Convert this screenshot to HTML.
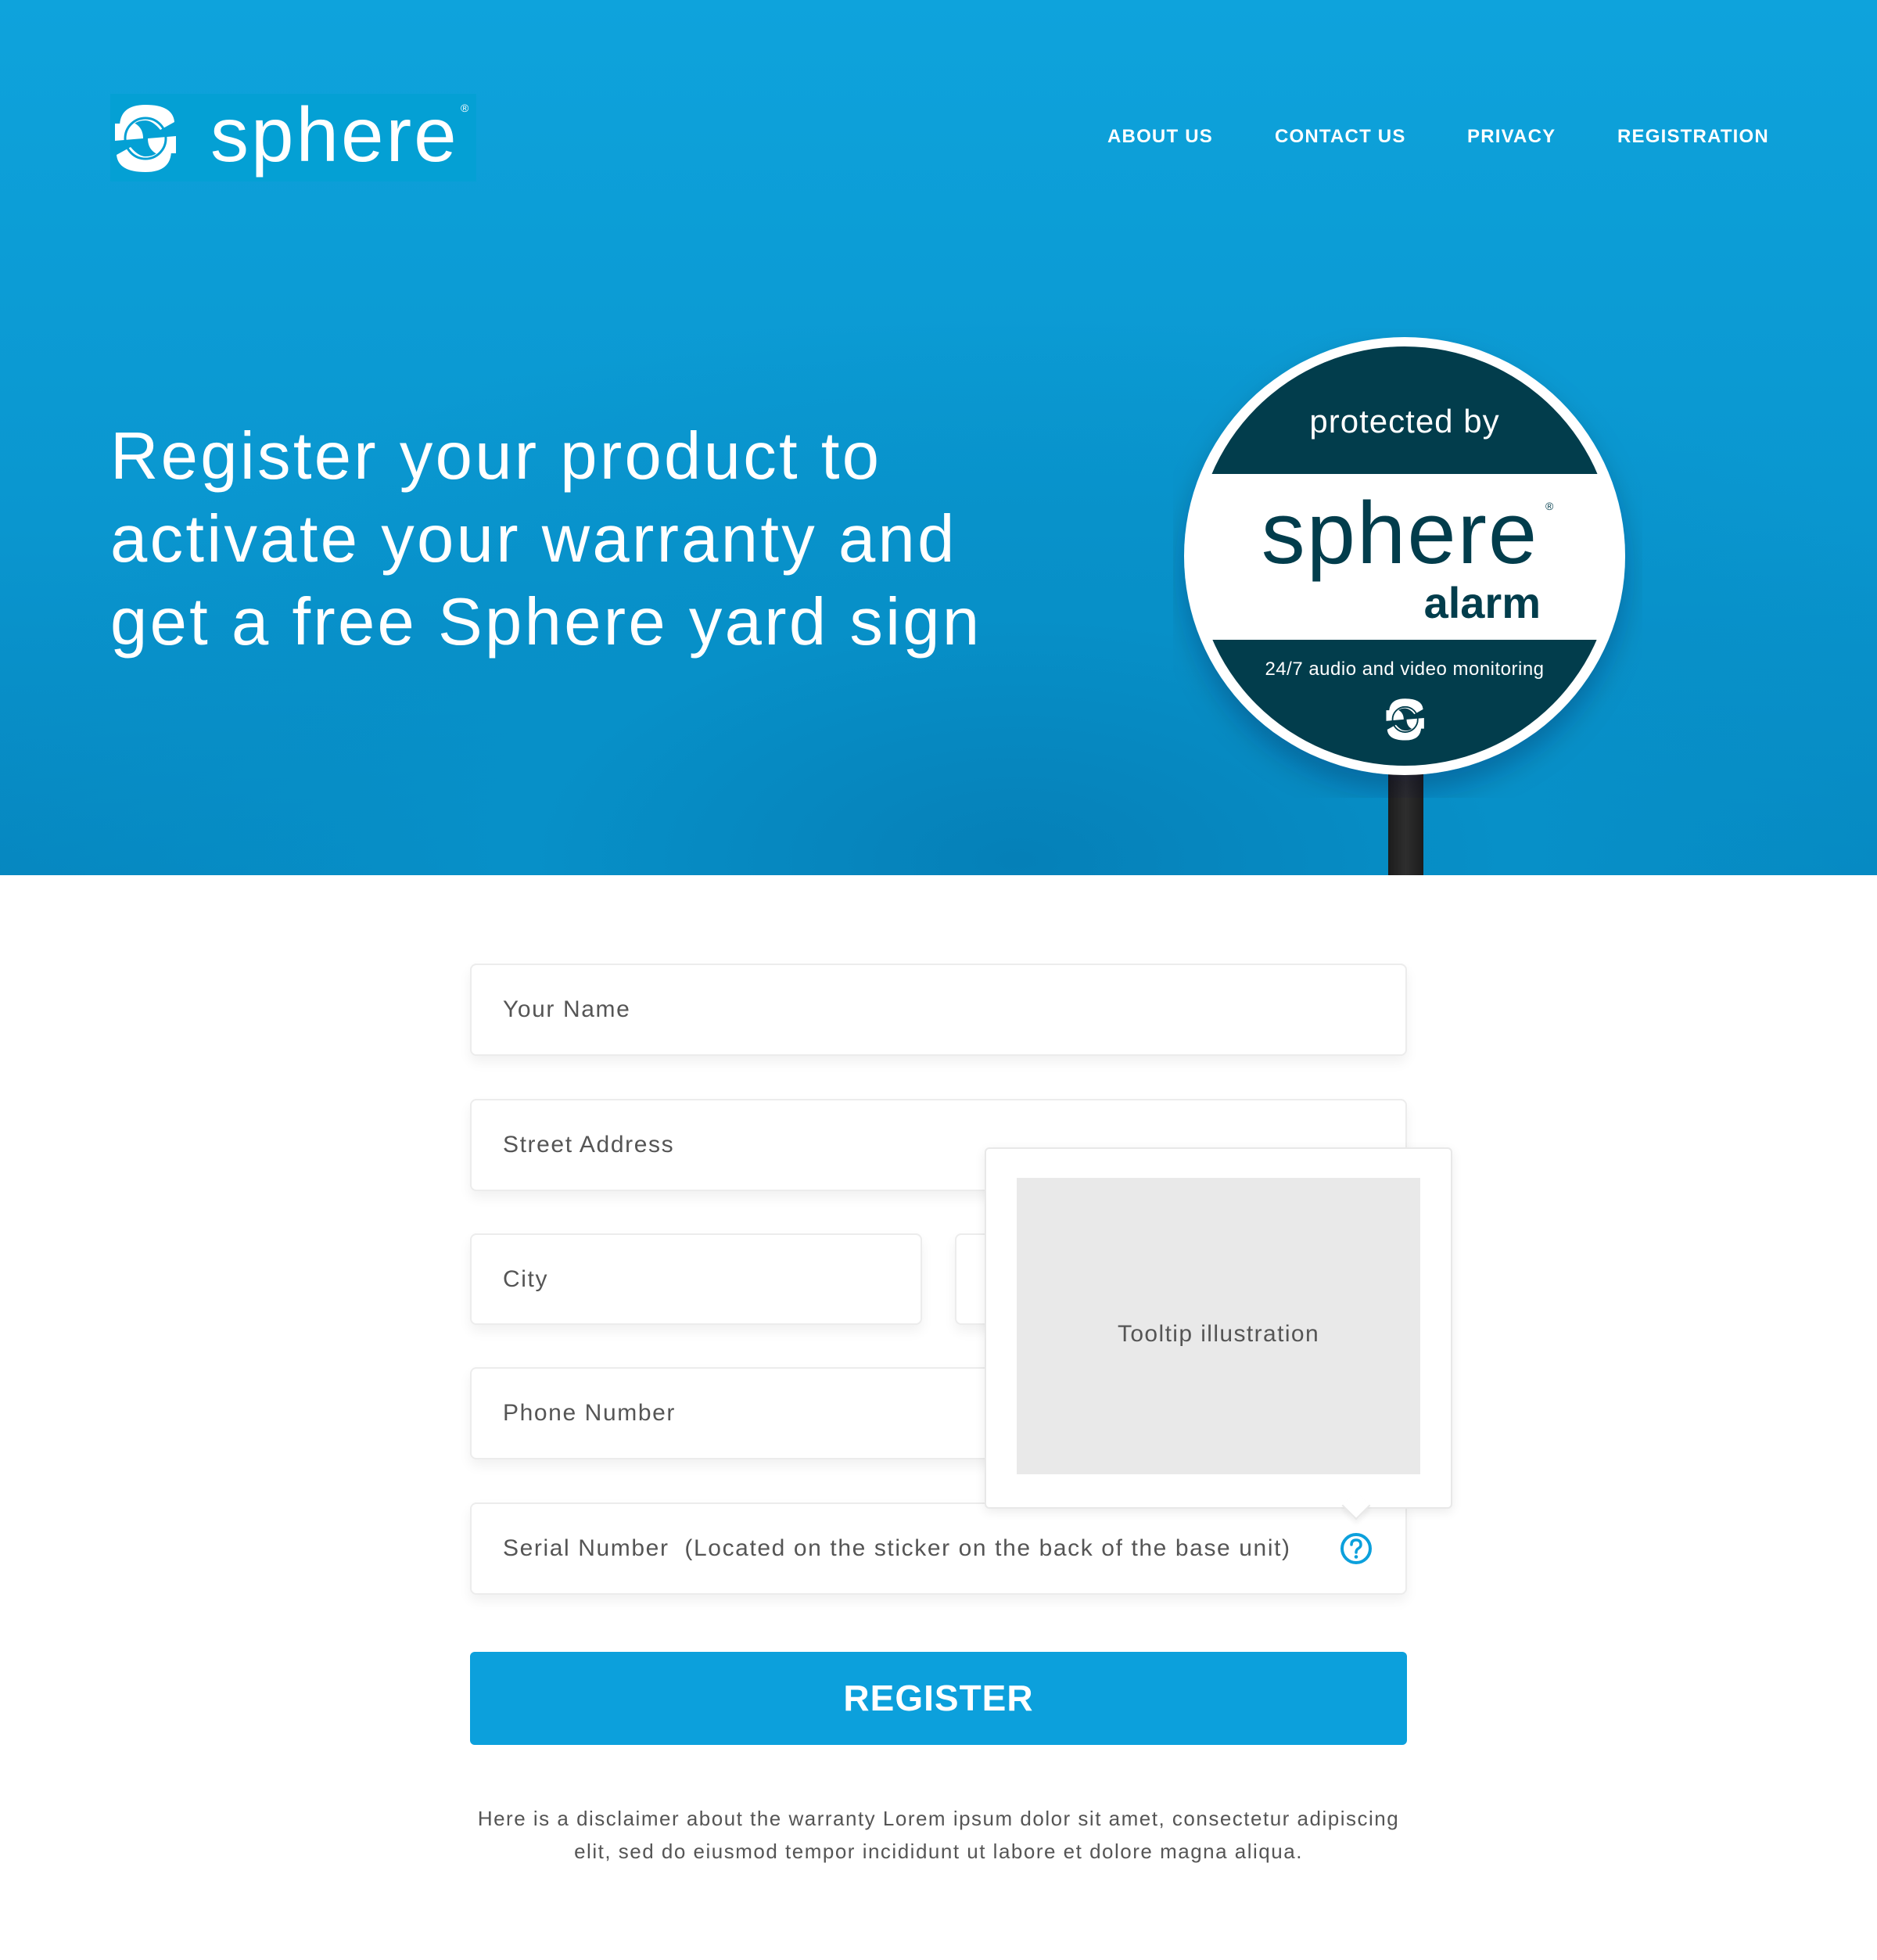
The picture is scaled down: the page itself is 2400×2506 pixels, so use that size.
<!DOCTYPE html>
<html><head><meta charset="utf-8">
<style>
*{margin:0;padding:0;box-sizing:border-box}
body{width:2400px;height:2506px;background:#fff;font-family:"Liberation Sans",sans-serif;position:relative;overflow:hidden}
.hero{position:absolute;left:0;top:0;width:2400px;height:1119px;background:radial-gradient(ellipse 1400px 700px at 1300px 1100px,#0580b8 0%,#0790c8 45%,rgba(14,162,218,0) 100%),linear-gradient(180deg,#0ea3dc 0%,#0a96cf 60%,#0686bf 100%)}
.logo{position:absolute;left:141px;top:120px;width:468px;height:112px;background:#04a0d4}
.logo .txt{position:absolute;left:128px;top:-4px;color:#fff;font-size:98px;line-height:112px;letter-spacing:3px}
.logo .r{position:absolute;left:448px;top:10px;color:#fff;font-size:14px}
.nav{position:absolute;top:160px;color:#fff;font-weight:bold;font-size:24px;line-height:30px;letter-spacing:1.2px}
.h1{position:absolute;left:141px;top:531px;color:#fff;font-size:85px;line-height:106px;white-space:nowrap;letter-spacing:3.3px}
.field{position:absolute;background:#fff;border:2px solid #ececec;border-radius:8px;box-shadow:0 8px 16px rgba(0,0,0,0.06);color:#555;font-size:30px;line-height:114px;padding-left:40px;letter-spacing:1.6px}
.btn{position:absolute;left:601px;top:2112px;width:1198px;height:119px;background:#0ca0dc;border-radius:6px;color:#fff;font-weight:bold;font-size:46px;line-height:119px;text-align:center;letter-spacing:1px}
.disc{position:absolute;left:500px;width:1400px;top:2304px;text-align:center;color:#555;font-size:26px;line-height:42px;letter-spacing:1.5px}
.tip{position:absolute;left:1259px;top:1467px;width:598px;height:462px;background:#fff;border:2px solid #e8e8e8;border-radius:6px;box-shadow:0 4px 14px rgba(0,0,0,0.08)}
.tip .img{position:absolute;left:39px;top:37px;width:516px;height:379px;background:#e9e9e9;color:#555;font-size:30px;text-align:center;line-height:379px;letter-spacing:1.4px;padding-top:10px}
</style></head><body>
<div class="hero">
  <div class="logo">
    <svg style="position:absolute;left:2px;top:12px" width="86" height="90" viewBox="0 0 86 90">
      <path d="M10 30 Q10 2 43 2 Q78 2 80 24 L62 34 Q52 22 43 22 Q24 22 22 40 Q10 36 10 30Z" fill="#fff"/>
      <path d="M76 60 Q76 88 43 88 Q8 88 6 66 L24 56 Q34 68 43 68 Q62 68 64 50 Q76 54 76 60Z" fill="#fff"/>
      <path d="M4 26 L30 26 Q40 32 40 45 L4 48Z" fill="#fff"/>
      <path d="M82 64 L56 64 Q46 58 46 45 L82 42Z" fill="#fff"/>
      <circle cx="43" cy="45" r="26" fill="none" stroke="#04a0d4" stroke-width="3"/>
    </svg>
    <div class="txt">sphere</div><div class="r">®</div>
  </div>
  <div class="nav" style="left:1416px">ABOUT US</div>
  <div class="nav" style="left:1630px">CONTACT US</div>
  <div class="nav" style="left:1876px">PRIVACY</div>
  <div class="nav" style="left:2068px">REGISTRATION</div>
  <div class="h1">Register your product to<br>activate your warranty and<br>get a free Sphere yard sign</div>
  <div style="position:absolute;left:1775px;top:960px;width:45px;height:159px;background:linear-gradient(90deg,#1c1c1c,#2e2e2e,#1c1c1c)"></div>
  <svg style="position:absolute;left:1500px;top:420px" width="600" height="600" viewBox="0 0 600 600">
    <defs><clipPath id="c"><circle cx="296" cy="291" r="268"/></clipPath>
    <filter id="s"><feDropShadow dx="0" dy="20" stdDeviation="18" flood-color="#003" flood-opacity="0.25"/></filter></defs>
    <ellipse cx="296" cy="291" rx="282" ry="280" fill="#fff" filter="url(#s)"/>
    <g clip-path="url(#c)">
      <rect x="0" y="0" width="600" height="186" fill="#023d4c"/>
      <rect x="0" y="398" width="600" height="300" fill="#023d4c"/>
    </g>
    <text x="296" y="133" text-anchor="middle" fill="#fff" font-family="Liberation Sans" font-size="42" letter-spacing="1">protected by</text>
    <text x="290" y="300" text-anchor="middle" fill="#023d4c" font-family="Liberation Sans" font-size="112" letter-spacing="2">sphere</text>
    <text x="476" y="232" fill="#023d4c" font-family="Liberation Sans" font-size="14">®</text>
    <text x="470" y="370" text-anchor="end" fill="#023d4c" font-family="Liberation Sans" font-weight="bold" font-size="56">alarm</text>
    <text x="296" y="443" text-anchor="middle" fill="#fff" font-family="Liberation Sans" font-size="24" letter-spacing="0.5">24/7 audio and video monitoring</text>
    <g transform="translate(270,472) scale(0.62)">
      <path d="M10 30 Q10 2 43 2 Q78 2 80 24 L62 34 Q52 22 43 22 Q24 22 22 40 Q10 36 10 30Z" fill="#fff"/>
      <path d="M76 60 Q76 88 43 88 Q8 88 6 66 L24 56 Q34 68 43 68 Q62 68 64 50 Q76 54 76 60Z" fill="#fff"/>
      <path d="M4 26 L30 26 Q40 32 40 45 L4 48Z" fill="#fff"/>
      <path d="M82 64 L56 64 Q46 58 46 45 L82 42Z" fill="#fff"/>
      <circle cx="43" cy="45" r="26" fill="none" stroke="#023d4c" stroke-width="3"/>
    </g>
  </svg>
</div>

<div class="field" style="left:601px;top:1232px;width:1198px;height:118px">Your Name</div>
<div class="field" style="left:601px;top:1405px;width:1198px;height:118px">Street Address</div>
<div class="field" style="left:601px;top:1577px;width:578px;height:117px">City</div>
<div class="field" style="left:1221px;top:1577px;width:578px;height:117px"></div>
<div class="field" style="left:601px;top:1748px;width:1198px;height:118px">Phone Number</div>
<div class="field" style="left:601px;top:1921px;width:1198px;height:118px">Serial Number&nbsp; (Located on the sticker on the back of the base unit)</div>
<svg style="position:absolute;left:1711px;top:1957px" width="46" height="46" viewBox="0 0 46 46">
  <circle cx="23" cy="23" r="18" fill="none" stroke="#0ca0dc" stroke-width="4"/>
  <path d="M17 18 Q17 12 23 12 Q29 12 29 18 Q29 21 25.5 23 Q23 24.5 23 28" fill="none" stroke="#0ca0dc" stroke-width="3.5" stroke-linecap="round"/>
  <circle cx="23" cy="33.5" r="2.3" fill="#0ca0dc"/>
</svg>
<div class="tip"><div class="img">Tooltip illustration</div></div>
<div style="position:absolute;left:1721px;top:1912px;width:26px;height:26px;background:#fff;transform:rotate(45deg);border-right:2px solid #e8e8e8;border-bottom:2px solid #e8e8e8;box-shadow:4px 4px 6px rgba(0,0,0,0.05)"></div>
<div class="btn">REGISTER</div>
<div class="disc">Here is a disclaimer about the warranty Lorem ipsum dolor sit amet, consectetur adipiscing<br>elit, sed do eiusmod tempor incididunt ut labore et dolore magna aliqua.</div>
</body></html>
